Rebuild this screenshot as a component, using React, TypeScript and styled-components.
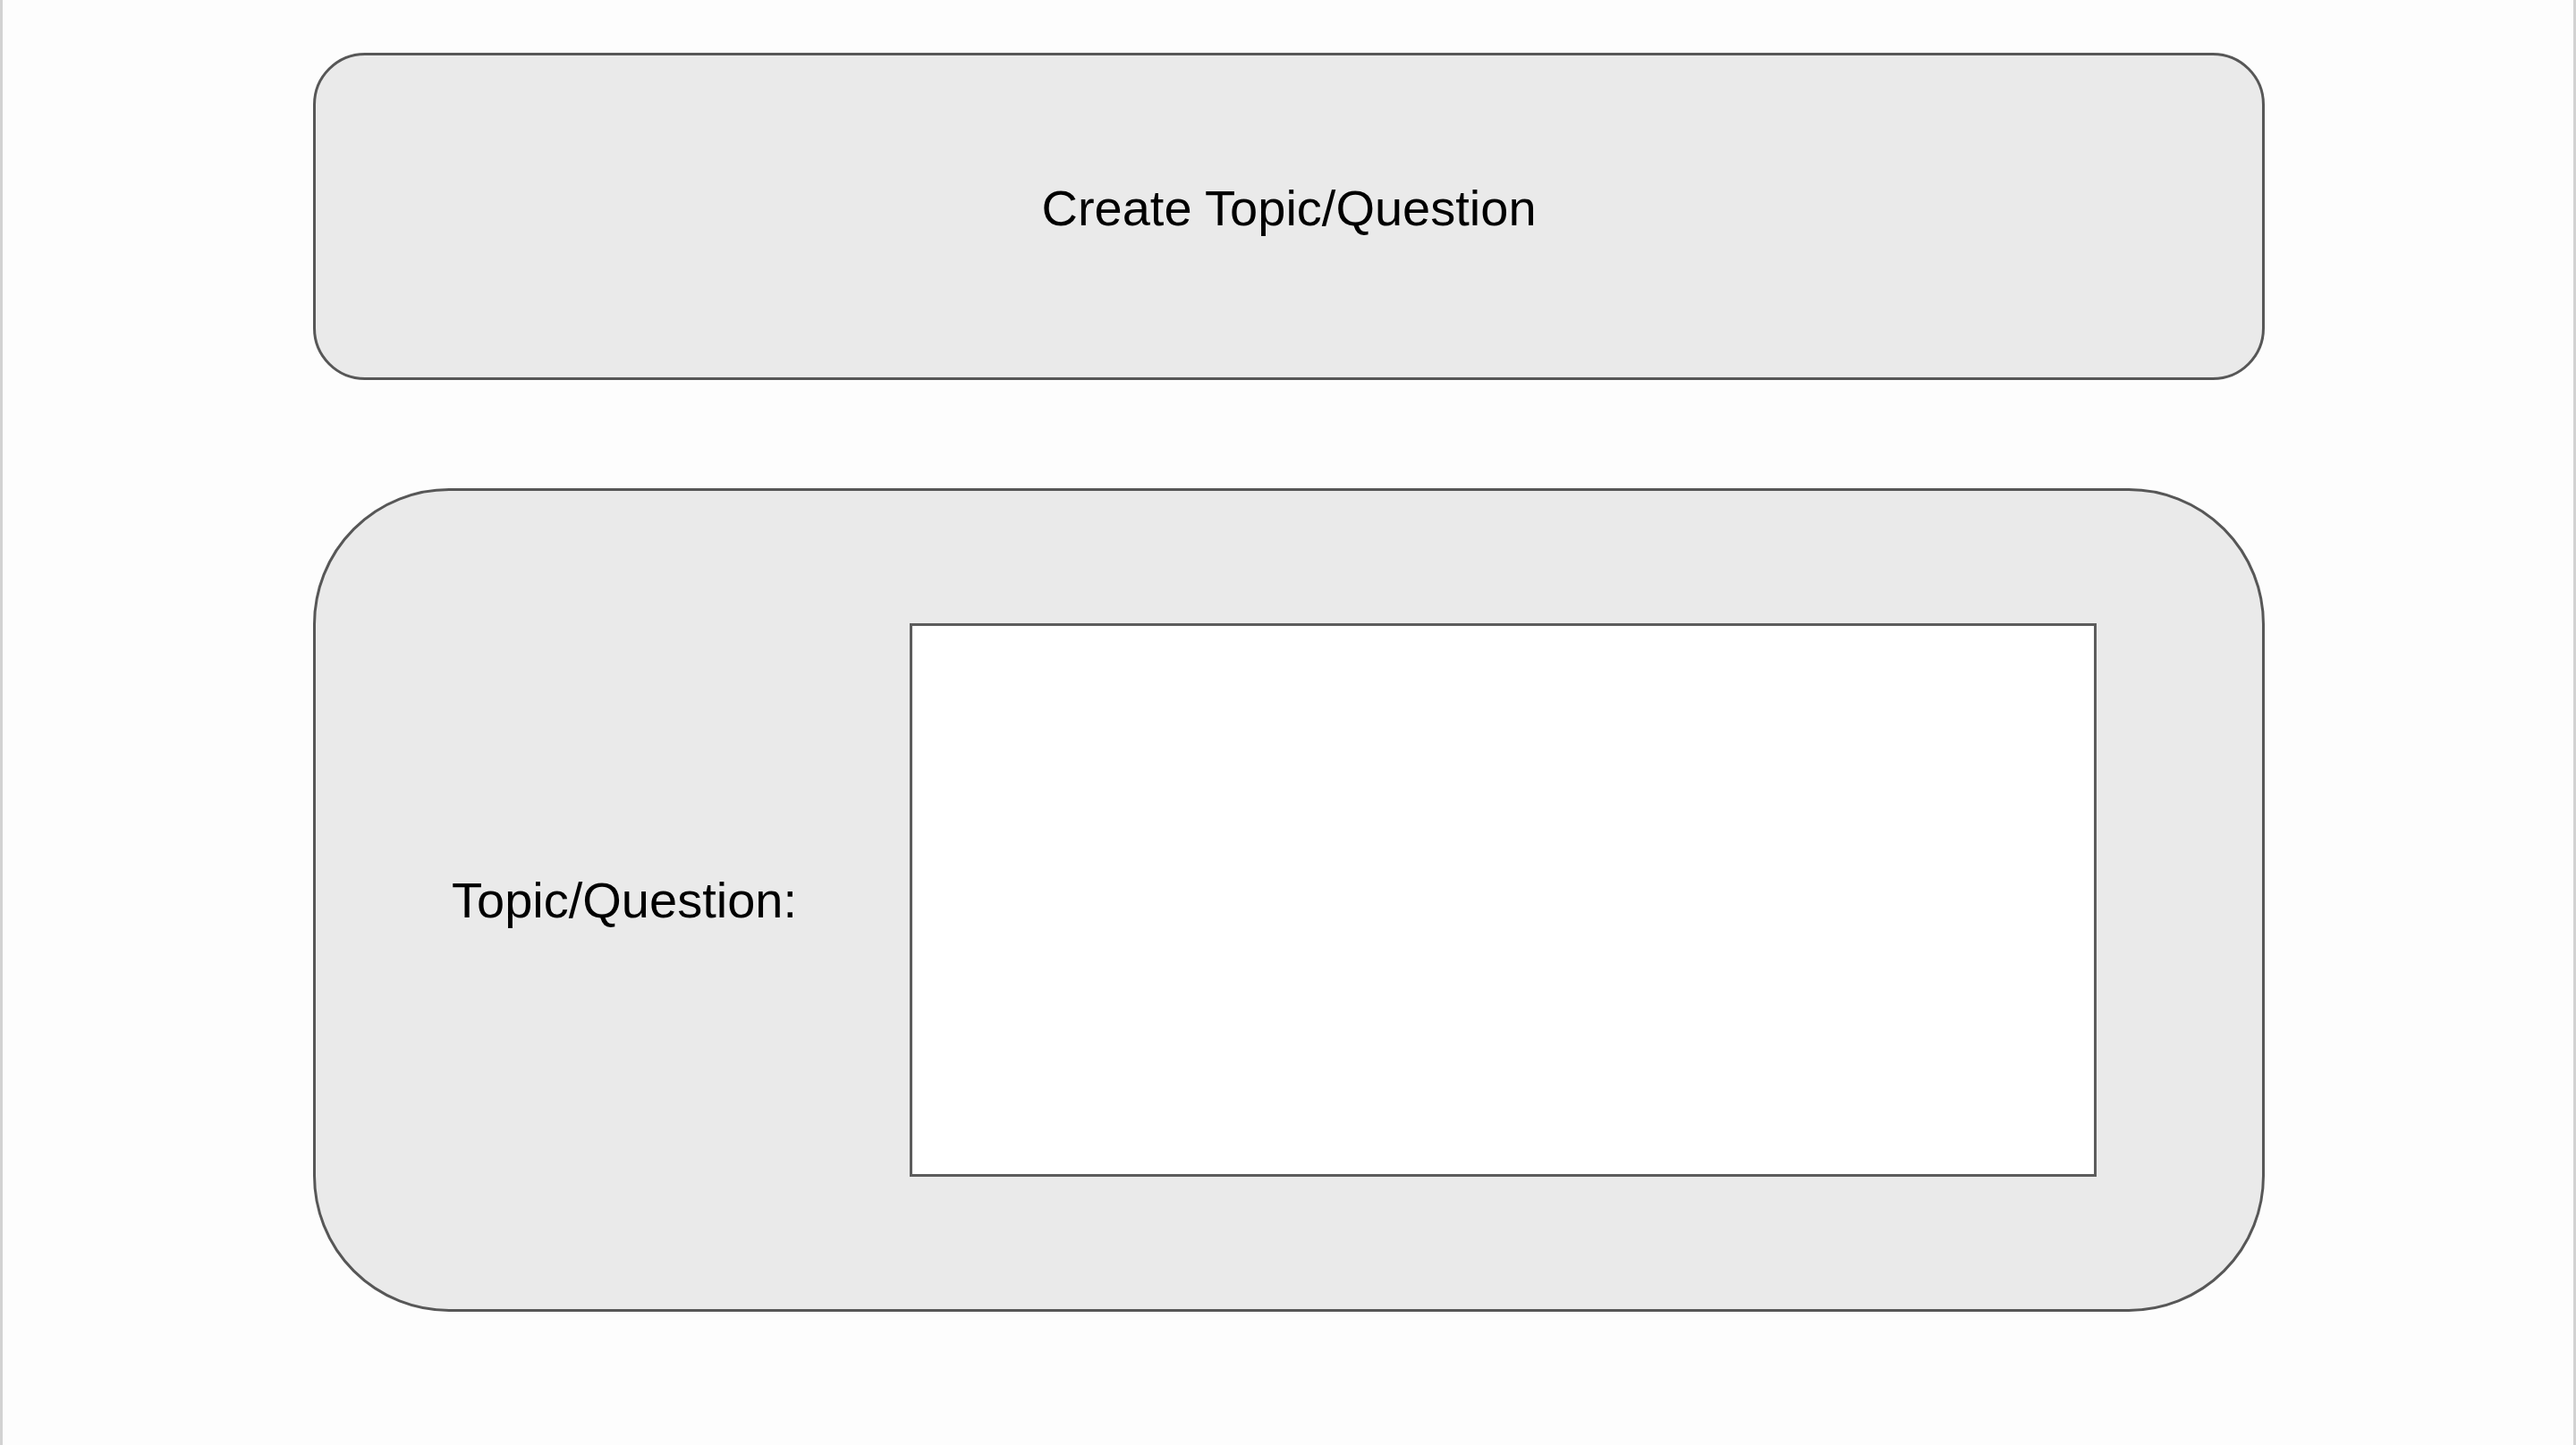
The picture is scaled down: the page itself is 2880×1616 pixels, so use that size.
import React from "react";
import styled, { createGlobalStyle } from "styled-components";

const GlobalStyle = createGlobalStyle`
  html, body {
    margin: 0;
    padding: 0;
    background: #fdfdfd;
  }
  body {
    font-family: "Liberation Sans", Arial, sans-serif;
  }
`;

const Page = styled.div`
  box-sizing: border-box;
  width: 2880px;
  height: 1616px;
  border-left: 3px solid #d2d2d2;
  border-right: 3px solid #d2d2d2;
  background: #fdfdfd;
  padding: 59px 0 0 347px;
  display: flex;
  flex-direction: column;
  gap: 121px;
`;

const Card = styled.div<{ $radius: number; $height: number }>`
  box-sizing: border-box;
  width: 2182px;
  height: ${(p) => p.$height}px;
  background: #eaeaea;
  border: 3px solid #575757;
  border-radius: ${(p) => p.$radius}px;
`;

const HeaderCard = styled(Card)`
  display: flex;
  align-items: center;
  justify-content: center;
  padding-bottom: 20px;
`;

const Title = styled.h1`
  margin: 0;
  font-family: "Liberation Sans", Arial, sans-serif;
  font-weight: 400;
  font-size: 56px;
  color: #000;
`;

const FormCard = styled(Card)`
  display: grid;
  grid-template-columns: 664px 1fr;
  padding: 148px 185px 148px 0;
`;

const Label = styled.label`
  display: flex;
  align-items: center;
  padding-left: 152px;
  font-family: "Liberation Sans", Arial, sans-serif;
  font-size: 56px;
  color: #000;
`;

const TextArea = styled.textarea`
  box-sizing: border-box;
  width: 100%;
  height: 100%;
  margin: 0;
  border: 3px solid #5c5c5c;
  border-radius: 0;
  background: #ffffff;
  resize: none;
  outline: none;
  font-family: "Liberation Sans", Arial, sans-serif;
  font-size: 40px;
  padding: 12px;
`;

export default function App() {
  return (
    <>
      <GlobalStyle />
      <Page>
        <HeaderCard $radius={58} $height={366}>
          <Title>Create Topic/Question</Title>
        </HeaderCard>
        <FormCard $radius={152} $height={921}>
          <Label htmlFor="topic">Topic/Question:</Label>
          <TextArea id="topic" />
        </FormCard>
      </Page>
    </>
  );
}
